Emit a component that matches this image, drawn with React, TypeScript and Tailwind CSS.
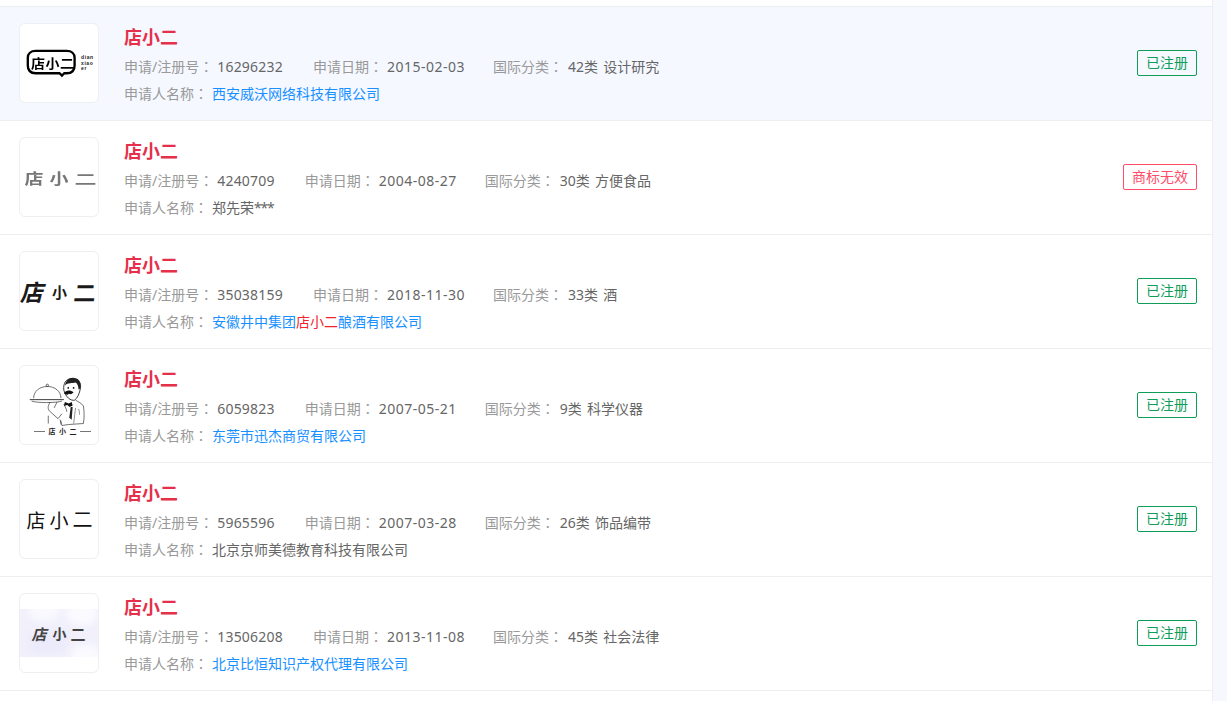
import React from "react";

type Row = {
  no: string;
  date: string;
  cls: string;
  applicant: React.ReactNode;
  linked: boolean;
  invalid?: boolean;
  logo: React.ReactNode;
};

const cjk = "font-['Noto_Sans','Noto_Sans_CJK_SC',sans-serif]";

function Logo1() {
  return (
    <div className="relative h-full w-full">
      <svg viewBox="0 0 80 80" className="absolute inset-0 h-full w-full">
        <path
          d="M16 27.5h32c5 0 8 3 8 7v8c0 5-3 8-8 8H45.5l-2.5 2.5-2.5-2.5H16c-5 0-8-3-8-8v-8c0-4 3-7 8-7z"
          fill="#fff"
          stroke="#000"
          strokeWidth="2.4"
        />
      </svg>
      <div className="absolute left-[11px] top-[27px] flex h-[24px] w-[43px] items-center justify-between text-[14px] leading-none font-bold text-black font-['Noto_Sans_CJK_SC',sans-serif]">
        <span className="inline-block scale-y-90">店</span>
        <span className="inline-block scale-y-90">小</span>
        <span className="inline-block scale-y-90">二</span>
      </div>
      <div className="absolute left-[61px] top-[31px] flex flex-col text-[5px] leading-[5.5px] font-bold tracking-[0.6px] text-[#222] font-['Liberation_Sans',sans-serif]">
        <span>dian</span>
        <span>xiao</span>
        <span>er</span>
      </div>
    </div>
  );
}

function Logo2() {
  return (
    <div className="flex h-full w-full items-center justify-center gap-[6px] pt-[1px] pl-[3px] text-[#777] font-['Noto_Sans_CJK_SC',sans-serif] font-bold">
      <span className="inline-block scale-y-[0.78] text-[19px] leading-none">店</span>
      <span className="inline-block scale-y-[0.78] text-[19px] leading-none">小</span>
      <span className="inline-block scale-y-[0.6] text-[22px] leading-none">二</span>
    </div>
  );
}

function Logo3() {
  return (
    <div className="flex h-full w-full items-center justify-center gap-[7px] text-[#1a1a1a] font-['Noto_Sans_CJK_SC',sans-serif] font-bold">
      <span className="inline-block -skew-x-[14deg] text-[23px] leading-none">店</span>
      <span className="inline-block text-[15px] leading-none">小</span>
      <span className="inline-block -skew-x-[6deg] text-[22px] leading-none">二</span>
    </div>
  );
}

function Logo4() {
  return (
    <div className="relative h-full w-full">
      <svg viewBox="0 0 80 80" className="absolute inset-0 h-full w-full" fill="none" stroke="#222" strokeWidth="0.65">
        {/* cloche */}
        <path d="M14 33c0-7 6-12 14-12s14 5 14 12" fill="#fff" />
        <circle cx="28" cy="19.8" r="1.2" />
        <path d="M10 34.5h35" strokeWidth="0.9" />
        <path d="M12 36c5 2 25 2 31 0" />
        {/* head */}
        <path d="M45 25c-1-7 2-12 8-12 7 0 10 4 9 10-1 5-3 10-6 12-4 1-9-3-11-10z" fill="#fff" strokeWidth="0.9" />
        <path d="M46 20c1-5 4-8 8-8 6 0 9 4 8 11l-2 1c0-3-1-6-3-7-3 1-8 0-11 3z" fill="#222" stroke="none" />
        <path d="M45 28c2-3 6-4 10-1-2 2-3 2.500-5 1.500-1 1.500-3 1-5-.5z" fill="#111" stroke="none" />
        <circle cx="49.500" cy="22.500" r="0.9" fill="#111" stroke="none" />
        <circle cx="55" cy="22.500" r="0.9" fill="#111" stroke="none" />
        {/* body */}
        <path d="M57 35c3 2 6 3 8 6 1 6 1 12 0 18l-15 1-7 1-2-6" />
        <path d="M46 37l-1 4 3.500-1 2.500 2 3-1.500-1-3.500-3 1.500z" fill="#111" stroke="none" />
        <path d="M52 42l-1.500 11 2.500 2 1-13z" fill="#222" stroke="none" />
        <path d="M57 43l-2 16M60 44c1 2 1 4 1 6" strokeWidth="0.5" />
        {/* arm */}
        <path d="M31 37c-2 3-3 6-1 9l9 8 4-5M38 37l-3 6M45 39c1 3 3 5 3 8" />
        <path d="M42 56v4M29 51v8" />
      </svg>
      <div className="absolute left-[14px] top-[60px] flex w-[57px] items-center justify-between text-[7px] leading-[10px] font-bold text-[#222] font-['Noto_Sans_CJK_SC',sans-serif]">
        <span className="h-px w-[11px] bg-[#777]" />
        <span className="inline-block">店</span>
        <span>小</span>
        <span>二</span>
        <span className="h-px w-[11px] bg-[#777]" />
      </div>
    </div>
  );
}

function Logo5() {
  return (
    <div className="flex h-full w-full items-center justify-center gap-[4px] pl-[1px] text-[#111] font-['Noto_Sans_CJK_SC',sans-serif] font-normal">
      <span className="text-[19px] leading-none">店</span>
      <span className="text-[19px] leading-none">小</span>
      <span className="text-[20px] leading-none">二</span>
    </div>
  );
}

function Logo6() {
  return (
    <div className="flex h-full w-full items-center">
      <div className="relative h-[48px] w-full overflow-hidden bg-[#f1f0fb]">
        <div className="absolute left-2 bottom-1 h-5 w-10 rounded-full bg-[#ebeafa] blur-[4px]" />
        <div className="absolute left-[46px] -top-2 h-6 w-8 rounded-full bg-[#fafaff] blur-[4px]" />
        <div className="absolute left-2 -top-2 h-5 w-8 rounded-full bg-[#f9f9ff] blur-[4px]" />
        <div className="absolute -bottom-2 left-[50px] h-5 w-8 rounded-full bg-[#fafaff] blur-[4px]" />
        <div className="absolute inset-0 flex items-center justify-center gap-[4px] pl-[1px] text-[#444] font-['Noto_Sans_CJK_SC',sans-serif] font-bold">
          <span className="inline-block -skew-x-[14deg] text-[15px] leading-none">店</span>
          <span className="inline-block text-[14px] leading-none">小</span>
          <span className="inline-block text-[15px] leading-none">二</span>
        </div>
      </div>
    </div>
  );
}

const rows: Row[] = [
  { no: "16296232", date: "2015-02-03", cls: "42类 设计研究", applicant: "西安威沃网络科技有限公司", linked: true, logo: <Logo1 /> },
  {
    no: "4240709",
    date: "2004-08-27",
    cls: "30类 方便食品",
    applicant: (
      <>
        郑先荣<span className="tracking-[-1.2px]">***</span>
      </>
    ),
    linked: false,
    invalid: true,
    logo: <Logo2 />,
  },
  {
    no: "35038159",
    date: "2018-11-30",
    cls: "33类 酒",
    applicant: (
      <>
        安徽井中集团<span className="text-[#f5222d]">店小二</span>酿酒有限公司
      </>
    ),
    linked: true,
    logo: <Logo3 />,
  },
  { no: "6059823", date: "2007-05-21", cls: "9类 科学仪器", applicant: "东莞市迅杰商贸有限公司", linked: true, logo: <Logo4 /> },
  { no: "5965596", date: "2007-03-28", cls: "26类 饰品编带", applicant: "北京京师美德教育科技有限公司", linked: false, logo: <Logo5 /> },
  { no: "13506208", date: "2013-11-08", cls: "45类 社会法律", applicant: "北京比恒知识产权代理有限公司", linked: true, logo: <Logo6 /> },
];

function Colon() {
  return <span className="font-['Noto_Sans_CJK_TC',sans-serif]">：</span>;
}

function Field({ label, value, className = "", valueClass = "" }: { label: string; value: string; className?: string; valueClass?: string }) {
  return (
    <span className={`flex items-center ${className}`}>
      <span className="text-[#999]">
        {label}
        <Colon />
      </span>
      <span className={`ml-[4px] text-[#666] ${valueClass}`}>{value}</span>
    </span>
  );
}

export default function App() {
  return (
    <div className={`flex h-[701px] w-[1227px] overflow-hidden bg-white text-[14px] ${cjk}`}>
      <main className="flex min-w-0 flex-1 flex-col pt-[6px]">
        {rows.map((r, i) => (
          <div
            key={r.no}
            className={`flex h-[114px] shrink-0 items-start border-t border-[#eceef2] pl-[19px] pr-[15px] pt-[16px] ${
              i === 0 ? "bg-[#f5f8ff]" : "bg-white"
            }`}
          >
            <div className="h-[80px] w-[80px] shrink-0 overflow-hidden rounded-[6px] border border-[#eeeff3] bg-white">
              {r.logo}
            </div>
            <div className="ml-[25px] flex min-w-0 flex-1 flex-col">
              <div className="h-[28px] text-[18px] leading-[28px] font-bold text-[#e6304b]">店小二</div>
              <div className="mt-[2px] flex h-[27px] items-center">
                <Field label="申请/注册号" value={r.no} valueClass="tracking-[0.2px]" />
                <Field label="申请日期" value={r.date} className="ml-[30px]" valueClass="tracking-[0.5px]" />
                <Field label="国际分类" value={r.cls} className="ml-[28px]" valueClass="ml-[5px] [word-spacing:1.5px]" />
              </div>
              <div className="flex h-[27px] items-center">
                <span className="text-[#999]">
                  申请人名称
                  <Colon />
                </span>
                <span className={`ml-[4px] ${r.linked ? "text-[#1890ff]" : "text-[#666]"}`}>{r.applicant}</span>
              </div>
            </div>
            <div
              className={`mt-[27px] flex h-[26px] shrink-0 items-center justify-center rounded-[2px] border pb-[1px] ${
                i === 0 ? "bg-transparent" : "bg-white"
              } ${r.invalid ? "w-[74px] border-[#ff4d6a] text-[#ff4d6a]" : "w-[60px] border-[#0f9d58] text-[#0f9d58]"}`}
            >
              {r.invalid ? "商标无效" : "已注册"}
            </div>
          </div>
        ))}
        <div className="flex-1 border-t border-[#eceef2]" />
      </main>
      <aside className="w-[15px] shrink-0 border-l border-[#eceef2] bg-[#f7f8fd]" />
    </div>
  );
}
